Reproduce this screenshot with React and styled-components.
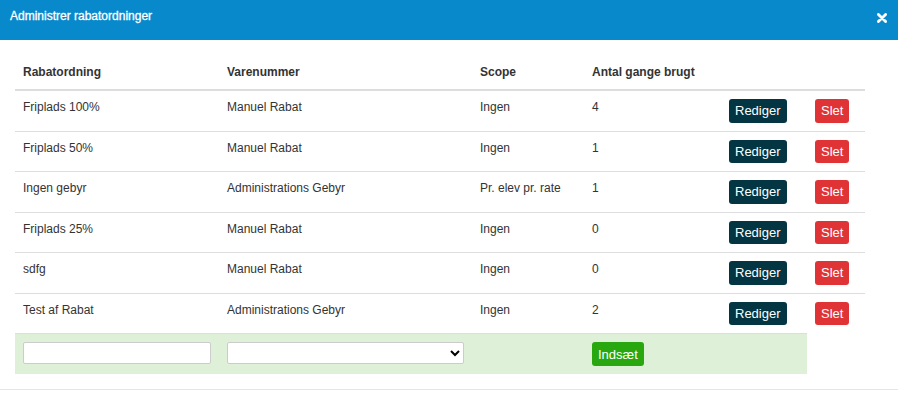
import React from 'react';
import styled, { createGlobalStyle } from 'styled-components';

const GlobalStyle = createGlobalStyle`
  html, body {
    margin: 0;
    padding: 0;
    background: #fff;
    font-family: "Liberation Sans", Arial, sans-serif;
    font-size: 12px;
    color: #333;
  }
`;

const Modal = styled.div`
  width: 898px;
  background: #fff;
`;

const Header = styled.div`
  box-sizing: border-box;
  height: 40px;
  display: flex;
  justify-content: space-between;
  align-items: flex-start;
  padding: 8px 11px 0 10px;
  background: #0789cc;
  color: #fff;
`;

const Title = styled.h4`
  margin: 0;
  font-size: 12px;
  line-height: 17px;
  font-weight: normal;
  -webkit-text-stroke: 0.3px #fff;
`;

const Close = styled.button`
  margin-top: 5px;
  padding: 0;
  border: 0;
  background: none;
  display: flex;
  cursor: pointer;
`;

const Body = styled.div`
  padding: 16px 15px 15px;
`;

const Table = styled.table`
  width: 850px;
  table-layout: fixed;
  border-collapse: collapse;
  border-spacing: 0;
`;

const Th = styled.th`
  text-align: left;
  vertical-align: bottom;
  padding: 8px;
  line-height: 17px;
  font-weight: bold;
  color: #333;
  border-bottom: 2px solid #ddd;
`;

const Td = styled.td`
  vertical-align: top;
  padding: 8px;
  line-height: 17px;
  border-top: ${p => (p.$first ? '0' : '1px solid #ddd')};
  background: ${p => (p.$add ? '#dff0d8' : 'transparent')};
`;

const Btn = styled.button`
  box-sizing: border-box;
  height: ${p => (p.$tall ? '24px' : '23.5px')};
  padding: 0 6px;
  border: 0;
  border-radius: 3px;
  font-family: "Liberation Sans", Arial, sans-serif;
  font-size: 13px;
  color: #fff;
  background: ${p => p.$bg};
  display: block;
  cursor: pointer;
`;

const Field = styled.input`
  box-sizing: border-box;
  width: 100%;
  height: 22px;
  border: 1px solid #ccc;
  border-radius: 2px;
  background: #fff;
  display: block;
  font-size: 12px;
`;

const Select = styled.select`
  box-sizing: border-box;
  width: 100%;
  height: 22px;
  border: 1px solid #ccc;
  border-radius: 2px;
  background: #fff;
  display: block;
  font-size: 12px;
`;

const Footer = styled.div`
  border-top: 1px solid #e5e5e5;
  height: 20px;
`;

const rows = [
  ['Friplads 100%', 'Manuel Rabat', 'Ingen', '4'],
  ['Friplads 50%', 'Manuel Rabat', 'Ingen', '1'],
  ['Ingen gebyr', 'Administrations Gebyr', 'Pr. elev pr. rate', '1'],
  ['Friplads 25%', 'Manuel Rabat', 'Ingen', '0'],
  ['sdfg', 'Manuel Rabat', 'Ingen', '0'],
  ['Test af Rabat', 'Administrations Gebyr', 'Ingen', '2'],
];

const widths = [204, 253, 112, 137, 86, 58];

export default function App() {
  return (
    <Modal>
      <GlobalStyle />
      <Header>
        <Title>Administrer rabatordninger</Title>
        <Close aria-label="Luk">
          <svg width="10" height="10" viewBox="0 0 10 10">
            <path d="M1.4 1.4 L8.6 8.6 M8.6 1.4 L1.4 8.6" stroke="#fff" strokeWidth="2.8" strokeLinecap="round" />
          </svg>
        </Close>
      </Header>
      <Body>
        <Table>
          <colgroup>
            {widths.map((w, i) => <col key={i} style={{ width: w }} />)}
          </colgroup>
          <thead>
            <tr>
              <Th>Rabatordning</Th>
              <Th>Varenummer</Th>
              <Th>Scope</Th>
              <Th>Antal gange brugt</Th>
              <Th />
              <Th />
            </tr>
          </thead>
          <tbody>
            {rows.map((r, i) => (
              <tr key={i}>
                {r.map((c, j) => <Td key={j} $first={i === 0}>{c}</Td>)}
                <Td $first={i === 0}><Btn $bg="#033642">Rediger</Btn></Td>
                <Td $first={i === 0}><Btn $bg="#e03336">Slet</Btn></Td>
              </tr>
            ))}
            <tr>
              <Td $add><Field type="text" /></Td>
              <Td $add><Select><option></option></Select></Td>
              <Td $add />
              <Td $add><Btn $tall $bg="#28a70e">Indsæt</Btn></Td>
              <Td $add />
            </tr>
          </tbody>
        </Table>
      </Body>
      <Footer />
    </Modal>
  );
}
